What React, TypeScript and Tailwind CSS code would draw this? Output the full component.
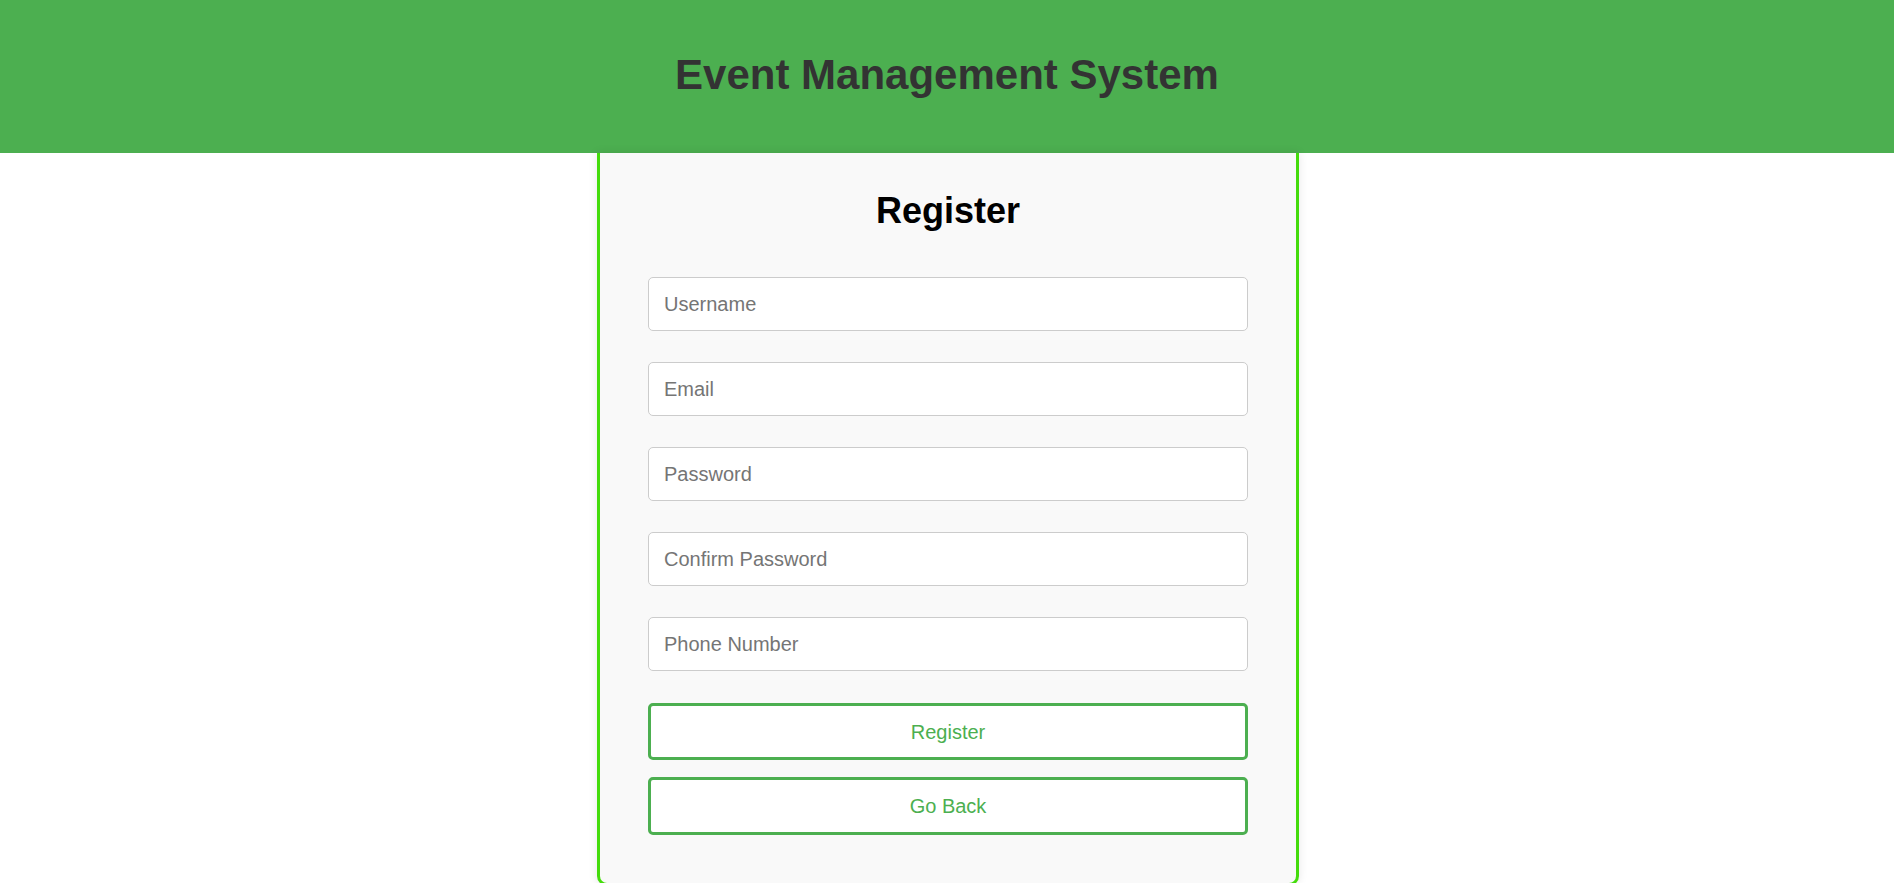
import * as React from "react";

const fields = [
  { name: "username", type: "text", placeholder: "Username" },
  { name: "email", type: "email", placeholder: "Email" },
  { name: "password", type: "password", placeholder: "Password" },
  { name: "confirm", type: "password", placeholder: "Confirm Password" },
  { name: "phone", type: "tel", placeholder: "Phone Number" },
];

export default function App() {
  return (
    <div className="min-h-screen bg-white font-['Liberation_Sans',Arial,sans-serif]">
      <header className="h-[153px] bg-[#4CAF50] flex items-center justify-center">
        <h1 className="text-[42px] font-bold text-[#333] leading-none -mt-[3px]">Event Management System</h1>
      </header>

      <div className="w-[702px] mx-auto translate-x-[1px] bg-[#f9f9f9] border-[3px] border-t-0 border-[#44dc0c] rounded-b-[10px] px-[48px] pt-[37px] pb-[48px] shadow-[0_0_10px_rgba(0,0,0,0.1)]">
        <h2 className="text-[36px] font-bold text-black text-center leading-[41px]">Register</h2>

        <form className="mt-[46px] flex flex-col" onSubmit={(e) => e.preventDefault()}>
          <div className="flex flex-col gap-[31px]">
            {fields.map((f) => (
              <input
                key={f.name}
                type={f.type}
                name={f.name}
                placeholder={f.placeholder}
                className="h-[54px] w-full bg-white border border-[#ccc] rounded-[5px] px-[15px] text-[20px] text-[#333] placeholder:text-[#757575] outline-none"
              />
            ))}
          </div>

          <button
            type="submit"
            className="mt-[32px] h-[57px] w-full bg-white border-[3px] border-[#4CAF50] rounded-[5px] text-[20px] text-[#4CAF50]"
          >
            Register
          </button>
          <button
            type="button"
            className="mt-[17px] h-[58px] w-full bg-white border-[3px] border-[#4CAF50] rounded-[5px] text-[20px] text-[#4CAF50]"
          >
            Go Back
          </button>
        </form>
      </div>
    </div>
  );
}
